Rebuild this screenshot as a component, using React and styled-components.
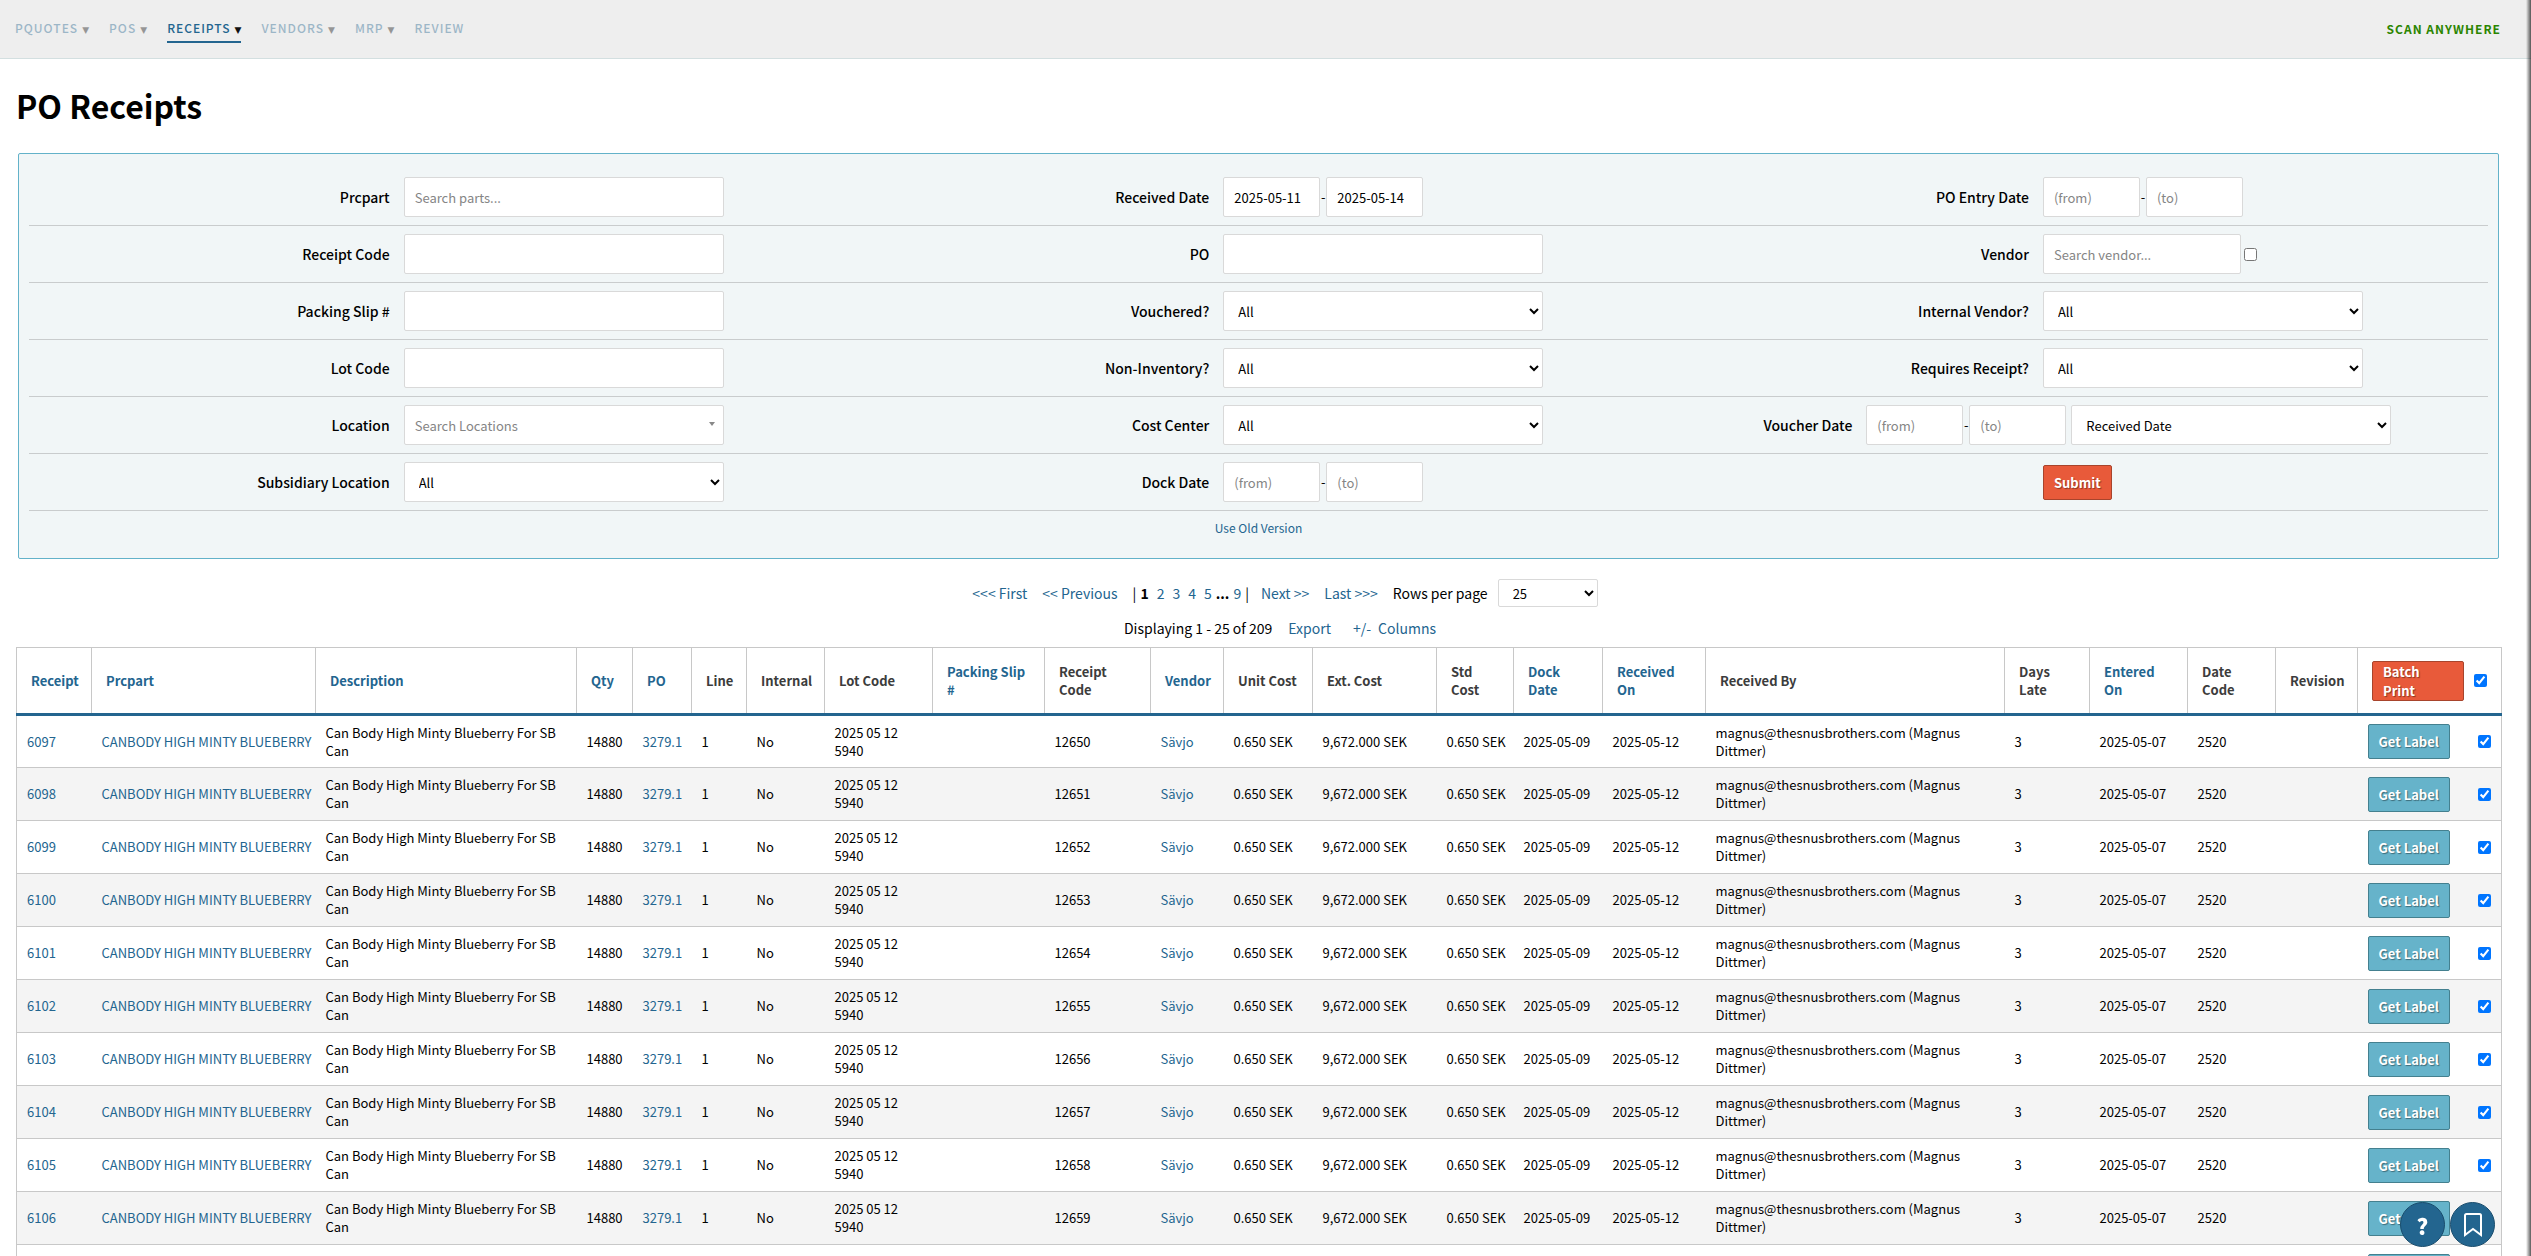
import React from 'react';
import styled, { createGlobalStyle, css } from 'styled-components';

//------------------ Data ----------------------

const NAV = [
  { label: 'PQuotes', menu: true },
  { label: 'POs', menu: true },
  { label: 'Receipts', menu: true, active: true },
  { label: 'Vendors', menu: true },
  { label: 'MRP', menu: true },
  { label: 'Review' },
];

const FILTERS = [
  [
    { id: 'prcpart', label: 'Prcpart', type: 'text', placeholder: 'Search parts...' },
    { id: 'received', label: 'Received Date', type: 'range', from: '2025-05-11', to: '2025-05-14' },
    { id: 'entry', label: 'PO Entry Date', type: 'range' },
  ],
  [
    { id: 'code', label: 'Receipt Code', type: 'text' },
    { id: 'po', label: 'PO', type: 'text' },
    { id: 'vendor', label: 'Vendor', type: 'vendor', placeholder: 'Search vendor...' },
  ],
  [
    { id: 'slip', label: 'Packing Slip #', type: 'text' },
    { id: 'vouchered', label: 'Vouchered?', type: 'select' },
    { id: 'internal', label: 'Internal Vendor?', type: 'select' },
  ],
  [
    { id: 'lot', label: 'Lot Code', type: 'text' },
    { id: 'noninv', label: 'Non-Inventory?', type: 'select' },
    { id: 'requires', label: 'Requires Receipt?', type: 'select' },
  ],
  [
    { id: 'location', label: 'Location', type: 'combo', placeholder: 'Search Locations' },
    { id: 'cost', label: 'Cost Center', type: 'select' },
    { id: 'voucher', label: 'Voucher Date', type: 'range', basis: 'Received Date', wide: true },
  ],
  [
    { id: 'subsidiary', label: 'Subsidiary Location', type: 'select' },
    { id: 'dock', label: 'Dock Date', type: 'range' },
    { id: 'submit', type: 'submit' },
  ],
];

const COLUMNS = [
  { key: 'receipt', title: 'Receipt', width: 75, sortable: true, link: true },
  { key: 'prcpart', title: 'Prcpart', width: 224, sortable: true, link: true },
  { key: 'description', title: 'Description', width: 261, sortable: true, wrap: true },
  { key: 'qty', title: 'Qty', width: 56, sortable: true },
  { key: 'po', title: 'PO', width: 59, sortable: true, link: true },
  { key: 'line', title: 'Line', width: 55 },
  { key: 'internal', title: 'Internal', width: 78 },
  { key: 'lot', title: 'Lot Code', width: 108, wrap: true },
  { key: 'slip', title: 'Packing Slip #', width: 112, sortable: true },
  { key: 'code', title: 'Receipt Code', width: 106 },
  { key: 'vendor', title: 'Vendor', width: 73, sortable: true, link: true },
  { key: 'unitCost', title: 'Unit Cost', width: 89 },
  { key: 'extCost', title: 'Ext. Cost', width: 124 },
  { key: 'stdCost', title: 'Std Cost', width: 77 },
  { key: 'dockDate', title: 'Dock Date', width: 89, sortable: true },
  { key: 'receivedOn', title: 'Received On', width: 103, sortable: true },
  { key: 'receivedBy', title: 'Received By', width: 299, wrap: true },
  { key: 'daysLate', title: 'Days Late', width: 85 },
  { key: 'enteredOn', title: 'Entered On', width: 98, sortable: true },
  { key: 'dateCode', title: 'Date Code', width: 88 },
  { key: 'revision', title: 'Revision', width: 82 },
];

const ROWS = Array.from({ length: 11 }, (_, i) => ({
  receipt: 6097 + i,
  prcpart: 'CANBODY HIGH MINTY BLUEBERRY',
  description: 'Can Body High Minty Blueberry For SB Can',
  qty: '14880',
  po: '3279.1',
  line: '1',
  internal: 'No',
  lot: '2025 05 12 5940',
  slip: '',
  code: 12650 + i,
  vendor: 'Sävjo',
  unitCost: '0.650 SEK',
  extCost: '9,672.000 SEK',
  stdCost: '0.650 SEK',
  dockDate: '2025-05-09',
  receivedOn: '2025-05-12',
  receivedBy: 'magnus@thesnusbrothers.com (Magnus Dittmer)',
  daysLate: '3',
  enteredOn: '2025-05-07',
  dateCode: '2520',
  revision: '',
}));

//------------------ Styles ----------------------

const GlobalStyle = createGlobalStyle`
  * {
    box-sizing: border-box;
  }

  body {
    margin: 0;
    background: #fff;
    color: #000;
    font-family: 'Noto Sans CJK SC', 'Noto Sans', sans-serif;
    font-size: 13px;
    line-height: 18px;
  }

  button,
  input,
  select {
    font-family: inherit;
  }

  a {
    color: #23658f;
    text-decoration: none;
  }
`;

const Page = styled.div`
  height: 100vh;
  overflow-y: auto;
  scrollbar-width: none;
`;

const EdgeShadow = styled.div`
  position: fixed;
  top: 0;
  right: 0;
  bottom: 0;
  width: 5px;
  background: linear-gradient(to right, rgba(0, 0, 0, 0), rgba(0, 0, 0, 0.65));
  pointer-events: none;
`;

const TopBar = styled.header`
  display: flex;
  align-items: center;
  justify-content: space-between;
  height: 59px;
  padding: 0 30px 0 15px;
  background: #eee;
  border-bottom: 1px solid #d3dfe0;
`;

const Nav = styled.nav`
  display: flex;
  gap: 20px;
`;

const NavLink = styled.a`
  padding: 4px 0 2px;
  border-bottom: 2px solid ${props => (props.$active ? '#23658f' : 'transparent')};
  font-size: 12px;
  font-weight: 500;
  letter-spacing: 1px;
  text-transform: uppercase;
  opacity: ${props => (props.$active ? 1 : 0.4)};
`;

const Caret = styled.span`
  margin-left: 4px;
  color: #111;
  font-family: 'DejaVu Sans', sans-serif;
  font-size: 9px;
  letter-spacing: 0;
`;

const ScanLink = styled.a`
  color: #2b8500;
  font-size: 12px;
  font-weight: 700;
  letter-spacing: 1px;
  text-transform: uppercase;
`;

const Main = styled.main`
  padding: 0 29px 0 16px;
`;

const Title = styled.h1`
  margin: 22px 0 24px;
  font-size: 32px;
  font-weight: 700;
  line-height: 48px;
`;

const FilterPanel = styled.form`
  margin: 0 3px 0 2px;
  padding: 15px 10px 21px;
  border: 1px solid #63b2c9;
  border-radius: 2px;
  background: #f1f6f7;
`;

const FilterRow = styled.div`
  display: grid;
  grid-template-columns: repeat(3, 1fr);
  padding: 8px 0;
  border-bottom: 1px solid #c9cccd;
`;

const Field = styled.div`
  display: flex;
  align-items: center;
  gap: 14px;
  height: 40px;
`;

const FieldLabel = styled.label`
  flex: 0 0 ${props => (props.$wide ? '184px' : '44%')};
  font-size: 14px;
  font-weight: 500;
  text-align: right;
`;

const Controls = styled.div`
  display: flex;
  align-items: center;
`;

const control = css`
  height: 40px;
  padding: 0 10px;
  border: 1px solid #d9d9d9;
  border-radius: 2px;
  background: #fff;
  color: #000;
  font-size: 13px;
`;

const TextInput = styled.input`
  ${control}
  width: ${props => props.$width || 320}px;

  &::placeholder {
    color: #858585;
  }
`;

const Select = styled.select`
  ${control}
  width: ${props => (props.$compact ? 100 : 320)}px;
  height: ${props => (props.$compact ? 28 : 40)}px;
`;

const Dash = styled.span`
  width: 6px;
  text-align: center;
`;

const BasisSelect = styled(Select)`
  margin-left: 5px;
`;

const Checkbox = styled.input`
  width: 13px;
  height: 13px;
  margin: 0 0 0 3px;
`;

const Combo = styled.div`
  position: relative;
`;

const ComboArrow = styled.span`
  position: absolute;
  top: 17px;
  right: 9px;
  border: 3px solid transparent;
  border-top: 4px solid #888;
`;

const Button = styled.button`
  padding: 7px 10px;
  border: 1px solid ${props => (props.$primary ? '#a8442c' : '#44808f')};
  border-radius: 2px;
  background: ${props => (props.$primary ? '#e85a3a' : '#66b3ca')};
  color: #fff;
  font-size: 13px;
  font-weight: 700;
  line-height: 19px;
  text-align: left;
  text-shadow: 1px 1px 1px rgba(0, 0, 0, 0.4);
`;

const BatchButton = styled(Button)`
  width: 92px;
  padding: 0 10px;
`;

const OldVersion = styled.div`
  padding-top: 8px;
  font-size: 12px;
  text-align: center;
`;

const Pager = styled.div`
  display: flex;
  align-items: center;
  justify-content: center;
  height: 28px;
  margin-top: 20px;
  padding-left: 52px;
  font-size: 14px;
`;

const PagerGroup = styled.div`
  display: flex;
  gap: 15px;
  margin-right: 15px;
`;

const PageStrip = styled(PagerGroup)`
  gap: 4px;
  margin-right: 12px;
`;

const PageNumbers = styled.span`
  display: flex;
  gap: 8px;
`;

const RowsLabel = styled.label`
  margin-right: 10px;
`;

const Summary = styled(Pager)`
  gap: 16px;
  height: 20px;
  margin: 11px 0 9px;
  padding-left: 42px;
`;

const ColumnsLink = styled.a`
  display: flex;
  gap: 7px;
  margin-left: 6px;
`;

const Table = styled.table`
  width: 100%;
  border: 1px solid #c8c8c8;
  border-collapse: collapse;
  table-layout: fixed;
`;

const HeadCell = styled.th`
  height: 67px;
  padding: 0 14px;
  border-right: 1px solid #c8c8c8;
  border-bottom: 3px solid #23658f;
  color: #3c3c3c;
  font-weight: 700;
  text-align: left;
`;

const Row = styled.tr`
  height: 53px;
  border-bottom: 1px solid #c8c8c8;

  &:nth-child(even) {
    background: #f4f4f4;
  }
`;

const Cell = styled.td`
  padding: 0 10px;
  white-space: ${props => (props.$wrap ? 'normal' : 'nowrap')};
`;

const Actions = styled.div`
  display: flex;
  align-items: center;
  justify-content: space-between;
`;

const Floating = styled.div`
  position: fixed;
  right: 36px;
  bottom: 9px;
  display: flex;
  gap: 5px;
`;

const RoundButton = styled.button`
  display: flex;
  align-items: center;
  justify-content: center;
  width: 45px;
  height: 45px;
  padding: 0;
  border: 1px solid #194c6c;
  border-radius: 50%;
  background: #23658f;
  color: #fff;
  font-size: 22px;
  font-weight: 900;
`;

//------------------ Components --------------------

const DateRange = ({ id, label, from, to, basis }) => (
  <>
    <TextInput id={id} $width={97} defaultValue={from} placeholder="(from)" />
    <Dash>-</Dash>
    <TextInput $width={97} defaultValue={to} placeholder="(to)" aria-label={`${label} to`} />
    {basis && (
      <BasisSelect aria-label={`${label} basis`}>
        <option>{basis}</option>
      </BasisSelect>
    )}
  </>
);

const FilterControl = ({ field }) => {
  switch (field.type) {
    case 'range':
      return <DateRange {...field} />;
    case 'select':
      return (
        <Select id={field.id}>
          <option>All</option>
        </Select>
      );
    case 'vendor':
      return (
        <>
          <TextInput id={field.id} $width={198} placeholder={field.placeholder} />
          <Checkbox type="checkbox" aria-label="Exclude vendor" />
        </>
      );
    case 'combo':
      return (
        <Combo>
          <TextInput id={field.id} placeholder={field.placeholder} />
          <ComboArrow />
        </Combo>
      );
    case 'submit':
      return (
        <Button type="button" $primary>
          Submit
        </Button>
      );
    default:
      return <TextInput id={field.id} placeholder={field.placeholder} />;
  }
};

const Filters = () => (
  <FilterPanel>
    {FILTERS.map(row => (
      <FilterRow key={row[0].id}>
        {row.map(field => (
          <Field key={field.id}>
            <FieldLabel htmlFor={field.label && field.id} $wide={field.wide}>
              {field.label}
            </FieldLabel>
            <Controls>
              <FilterControl field={field} />
            </Controls>
          </Field>
        ))}
      </FilterRow>
    ))}
    <OldVersion>
      <a href="#old">Use Old Version</a>
    </OldVersion>
  </FilterPanel>
);

const Pagination = () => (
  <>
    <Pager>
      <PagerGroup>
        <a href="#first">&lt;&lt;&lt; First</a>
        <a href="#previous">&lt;&lt; Previous</a>
      </PagerGroup>
      <PageStrip>
        <span>|</span>
        <PageNumbers>
          <b>1</b>
          <a href="#2">2</a>
          <a href="#3">3</a>
          <a href="#4">4</a>
          <a href="#5">5</a>
        </PageNumbers>
        <b>...</b>
        <a href="#9">9</a>
        <span>|</span>
      </PageStrip>
      <PagerGroup>
        <a href="#next">Next &gt;&gt;</a>
        <a href="#last">Last &gt;&gt;&gt;</a>
      </PagerGroup>
      <RowsLabel htmlFor="per-page">Rows per page</RowsLabel>
      <Select id="per-page" $compact>
        <option>25</option>
      </Select>
    </Pager>
    <Summary>
      <span>Displaying 1 - 25 of 209</span>
      <a href="#export">Export</a>
      <ColumnsLink href="#columns">
        <span>+/-</span>
        <span>Columns</span>
      </ColumnsLink>
    </Summary>
  </>
);

const ReceiptsTable = () => (
  <Table>
    <colgroup>
      {COLUMNS.map(col => (
        <col key={col.key} width={col.width} />
      ))}
      <col width={144} />
    </colgroup>
    <thead>
      <tr>
        {COLUMNS.map(col => (
          <HeadCell key={col.key}>
            {col.sortable ? <a href={`#${col.key}`}>{col.title}</a> : col.title}
          </HeadCell>
        ))}
        <HeadCell>
          <Actions>
            <BatchButton type="button" $primary>
              Batch
              <br />
              Print
            </BatchButton>
            <Checkbox type="checkbox" defaultChecked aria-label="Select all" />
          </Actions>
        </HeadCell>
      </tr>
    </thead>
    <tbody>
      {ROWS.map(row => (
        <Row key={row.receipt}>
          {COLUMNS.map(col => (
            <Cell key={col.key} $wrap={col.wrap}>
              {col.link ? <a href={`#${row.receipt}`}>{row[col.key]}</a> : row[col.key]}
            </Cell>
          ))}
          <Cell>
            <Actions>
              <Button type="button">Get Label</Button>
              <Checkbox type="checkbox" defaultChecked aria-label={`Select ${row.receipt}`} />
            </Actions>
          </Cell>
        </Row>
      ))}
    </tbody>
  </Table>
);

const App = () => (
  <Page>
    <GlobalStyle />
    <TopBar>
      <Nav>
        {NAV.map(item => (
          <NavLink key={item.label} href={`#${item.label}`} $active={item.active}>
            {item.label}
            {item.menu && <Caret>▼</Caret>}
          </NavLink>
        ))}
      </Nav>
      <ScanLink href="#scan">Scan Anywhere</ScanLink>
    </TopBar>
    <Main>
      <Title>PO Receipts</Title>
      <Filters />
      <Pagination />
      <ReceiptsTable />
    </Main>
    <Floating>
      <RoundButton type="button" aria-label="Help">
        ?
      </RoundButton>
      <RoundButton type="button" aria-label="Bookmarks">
        <svg width="20" height="25" viewBox="0 0 20 25" fill="none" stroke="#fff" strokeWidth="2">
          <path d="M2 3.5Q2 2 3.5 2h13Q18 2 18 3.5V23l-8-6-8 6z" />
        </svg>
      </RoundButton>
    </Floating>
    <EdgeShadow />
  </Page>
);

export default App;
